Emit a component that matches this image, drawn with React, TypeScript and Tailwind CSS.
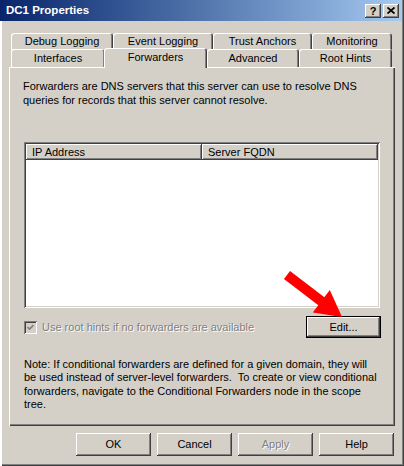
const raised =
  "shadow-[inset_-1px_-1px_0_#404040,inset_1px_1px_0_#ffffff,inset_-2px_-2px_0_#808080,inset_2px_2px_0_#d4d0c8]";
const sunken =
  "shadow-[inset_1px_1px_0_#808080,inset_-1px_-1px_0_#ffffff,inset_2px_2px_0_#404040,inset_-2px_-2px_0_#d4d0c8]";
const tabEdge =
  "shadow-[inset_1px_1px_0_#ffffff,inset_-1px_0_0_#404040,inset_-2px_0_0_#808080]";
const disabledText = "text-[#808080] [text-shadow:1px_1px_0_#ffffff]";

const Tab = ({ label, className }: { label: string; className: string }) => (
  <div
    className={`flex items-center justify-center rounded-t-[3px] bg-[#d4d0c8] ${tabEdge} ${className}`}
  >
    {label}
  </div>
);

const DialogButton = ({ label, disabled }: { label: string; disabled?: boolean }) => (
  <div
    className={`w-[75px] h-[23px] flex items-center justify-center bg-[#d4d0c8] ${raised} ${
      disabled ? disabledText : "text-black"
    }`}
  >
    {label}
  </div>
);

const App = () => {
  return (
    <div className="relative w-[404px] h-[466px] bg-[#d4d0c8] flex flex-col text-[11px] text-black font-['Liberation_Sans',Arial,sans-serif] shadow-[inset_2px_0_0_#ffffff,inset_-1px_-1px_0_#404040,inset_-2px_-2px_0_#808080] overflow-hidden select-none">
      {/* title bar */}
      <div className="h-[21px] mr-[2px] flex items-center justify-between pl-[6px] pr-[3px] bg-gradient-to-r from-[#0a246a] to-[#a6caf0]">
        <span className="text-white font-bold text-[11.5px]">DC1 Properties</span>
        <div className="flex gap-[2px]">
          <div className={`w-[16px] h-[14px] flex items-center justify-center bg-[#d4d0c8] ${raised} font-bold text-[11px] leading-none pt-[1px]`}>
            ?
          </div>
          <div className={`w-[16px] h-[14px] flex items-center justify-center bg-[#d4d0c8] ${raised}`}>
            <svg width="8" height="7" viewBox="0 0 8 7">
              <path d="M0.5 0.5 L7.5 6.5 M7.5 0.5 L0.5 6.5" stroke="#000" strokeWidth="1.8" />
            </svg>
          </div>
        </div>
      </div>

      <div className="flex flex-col px-[9px] pt-[11px]">
        {/* tab rows */}
        <div className="flex pl-[2px] h-[17px] pt-px">
          <Tab label="Debug Logging" className="w-[102px] h-[17px]" />
          <Tab label="Event Logging" className="w-[100px] h-[17px]" />
          <Tab label="Trust Anchors" className="w-[99px] h-[17px]" />
          <Tab label="Monitoring" className="w-[80px] h-[17px]" />
        </div>
        <div className="relative z-10 flex items-end pl-[2px] h-[18px]">
          <Tab label="Interfaces" className="w-[94px] h-[18px] pt-px" />
          <Tab label="Forwarders" className="relative z-10 w-[103px] h-[20px] -ml-px -mb-px pb-[1px]" />
          <Tab label="Advanced" className="w-[92px] h-[18px] pt-px" />
          <Tab label="Root Hints" className="w-[93px] h-[18px] pt-px" />
        </div>

        {/* tab panel */}
        <div className="h-[359px] flex flex-col px-[15px] pt-[12px] shadow-[inset_1px_1px_0_#ffffff,inset_-1px_-1px_0_#404040,inset_-2px_-2px_0_#808080]">
          <div className="leading-[14px] -ml-px">
            <div>Forwarders are DNS servers that this server can use to resolve DNS</div>
            <div>queries for records that this server cannot resolve.</div>
          </div>

          <div className={`mt-[35px] w-[356px] h-[166px] bg-white p-[2px] ${sunken}`}>
            <div className="flex h-[16px]">
              <div className={`w-[176px] h-[16px] flex items-center pl-[6px] bg-[#d4d0c8] ${raised}`}>IP Address</div>
              <div className={`w-[176px] h-[16px] flex items-center pl-[6px] bg-[#d4d0c8] ${raised}`}>Server FQDN</div>
            </div>
          </div>

          <div className="mt-[8px] h-[22px] flex items-center">
            <div className={`w-[13px] h-[13px] bg-[#d4d0c8] flex items-center justify-center ${sunken}`}>
              <svg width="7" height="7" viewBox="0 0 7 7">
                <path d="M0.5 3 L2.5 5 L6.5 1" stroke="#808080" strokeWidth="1.6" fill="none" />
              </svg>
            </div>
            <span className={`ml-[5px] ${disabledText}`}>Use root hints if no forwarders are available</span>
            <div className="ml-auto mr-[-1px] w-[75px] h-[22px] border border-black bg-[#d4d0c8]">
              <div className={`w-full h-full flex items-center justify-center ${raised}`}>Edit...</div>
            </div>
          </div>

          <div className="mt-[20px] leading-[13.4px] whitespace-pre">
            <div>Note: If conditional forwarders are defined for a given domain, they will</div>
            <div>be used instead of server-level forwarders.  To create or view conditional</div>
            <div>forwarders, navigate to the Conditional Forwarders node in the scope</div>
            <div>tree.</div>
          </div>
        </div>

        {/* dialog buttons */}
        <div className="mt-[7px] flex justify-end gap-[6px] pr-px">
          <DialogButton label="OK" />
          <DialogButton label="Cancel" />
          <DialogButton label="Apply" disabled />
          <DialogButton label="Help" />
        </div>
      </div>

      {/* red annotation arrow */}
      <svg className="absolute inset-0 pointer-events-none" width="404" height="466" viewBox="0 0 404 466">
        <path d="M287 275 L323 302.5" stroke="#ff0000" strokeWidth="10" strokeLinecap="butt" />
        <polygon points="342,317 312.8,312.4 329.8,290" fill="#ff0000" />
      </svg>
    </div>
  );
};

export default App;
